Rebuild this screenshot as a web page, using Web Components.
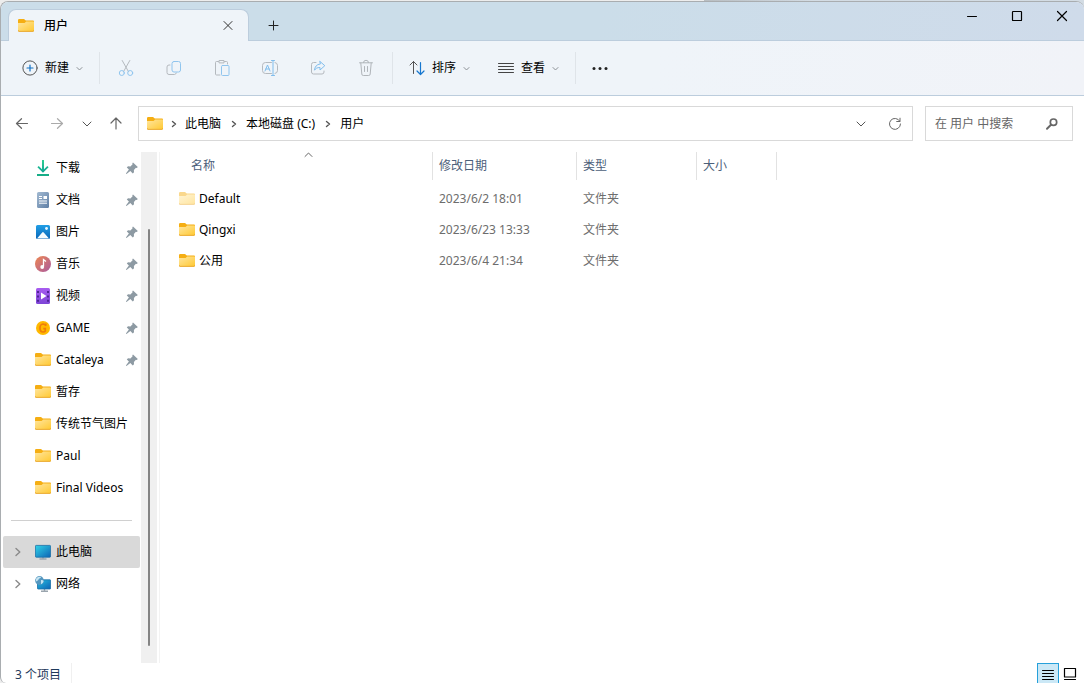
<!DOCTYPE html>
<html lang="zh-CN">
<head>
<meta charset="utf-8">
<meta name="viewport" content="width=device-width, initial-scale=1">
<title>用户</title>
<style>
  html, body { margin: 0; height: 100%; }
  body {
    background: linear-gradient(90deg, #ededed 64.9%, #b9bec2 64.9%, #d3dce4 75%);
    font: 12px/16px "Noto Sans", "Noto Sans CJK SC", sans-serif;
    color: #000;
    overflow: hidden;
  }
</style>
</head>
<body>
<explorer-window></explorer-window>

<script>
const FOLDER = (id, a, b, tab, edge) => `<svg width="16" height="16" viewBox="0 1 16 16">
  <defs><linearGradient id="${id}" x1="0" y1="0" x2="1" y2="1"><stop offset="0" stop-color="${a}"/><stop offset="1" stop-color="${b}"/></linearGradient></defs>
  <path d="M0 3.2A1.2 1.2 0 0 1 1.2 2H6l1.8 1.6H15a1 1 0 0 1 1 1V8H0z" fill="${tab}"/>
  <path d="M0 6h6.6l1.6-1.5H15.5l.5.5v8.2a1 1 0 0 1-1 1H1a1 1 0 0 1-1-1z" fill="url(#${id})"/>
  <path d="M0 13.200a1.1 1.1 0 0 0 1 1.2h14A1.1 1.1 0 0 0 16 13.200" fill="none" stroke="${edge}" stroke-width=".9"/></svg>`;
const LINE = (w, h, body, stroke = '#333') =>
  `<svg width="${w}" height="${h}" viewBox="0 0 ${w} ${h}" fill="none" stroke="${stroke}" stroke-linecap="round" stroke-linejoin="round">${body}</svg>`;

const ICONS = {
  folder: FOLDER('f', '#ffe6a0', '#ffc933', '#f5ae13', '#e8a11c'),
  'folder-dim': FOLDER('f', '#fff4d4', '#ffe5a0', '#fad88d', '#f3cf8c'),
  close: LINE(10, 10, '<path d="M1 .5l8 8M9 .5L1 8.500"/>', '#333'),
  'win-close': LINE(12, 12, '<path d="M1.5 1.5l9 9M10.5 1.5l-9 9" stroke-width="1.2"/>', '#000'),
  'win-min': LINE(10, 10, '<path d="M.5 5.5h9"/>', '#000'),
  'win-max': LINE(12, 12, '<rect x="1.5" y="1.5" width="9" height="9" rx=".6" stroke-width="1.2"/>', '#000'),
  plus: LINE(11, 11, '<path d="M5.5 1v9M1 5.5h9"/>', '#222'),
  add: LINE(16, 16, '<circle cx="8" cy="8" r="7.1" stroke="#555"/><path d="M8 5v6M5 8h6" stroke="#1170c4" stroke-width="1.2"/>'),
  down: LINE(7, 7, '<path d="M1 2.5l2.5 2.5L6 2.5"/>', '#8c9196'),
  'down-lg': LINE(10, 8, '<path d="M1 2l4 4 4-4"/>', '#555'),
  cut: LINE(16, 18, '<path d="M4.2 1.5l6.2 11M11.8 1.5L5.6 12.5" stroke="#b4b9be"/><circle cx="3.8" cy="14" r="2.5" stroke="#90c5ee"/><circle cx="12.2" cy="14" r="2.5" stroke="#90c5ee"/>'),
  copy: LINE(16, 16, '<path d="M4 5H3a2 2 0 0 0-2 2v5.5a2 2 0 0 0 2 2h5.500a2 2 0 0 0 1.800-1.500" stroke="#b4b9be"/><rect x="6" y="1.500" width="8.500" height="10.500" rx="2" stroke="#90c5ee"/>'),
  paste: LINE(16, 18, '<path d="M4.500 2.500H2.500a1 1 0 0 0-1 1V15a1 1 0 0 0 1 1H6M10.500 2.500h2a1 1 0 0 1 1 1V5M5 3.500v-2h5v2z" stroke="#b4b9be"/><rect x="7.500" y="6.500" width="7.500" height="10" rx="1" stroke="#90c5ee"/>'),
  rename: LINE(18, 18, '<path d="M10.500 3.500h-6a3 3 0 0 0-3 3v5a3 3 0 0 0 3 3h6M14 3.500a3 3 0 0 1 2.500 3v5a3 3 0 0 1-2.500 3" stroke="#b4b9be"/><path d="M12 1.500v15M10.500 1.500h3M10.500 16.500h3M4 12l2.500-6L9 12M4.800 10h3.400" stroke="#80bdec"/>'),
  share: LINE(16, 16, '<path d="M6 2.500H3.500a2 2 0 0 0-2 2V12a2 2 0 0 0 2 2h8.500a2 2 0 0 0 2-2v-1" stroke="#b4b9be"/><path d="M10 1.500l4.800 4.200L10 10V7.500c-2.800 0-4.300.8-5.500 2.700.3-3.300 2-5.900 5.500-6.200z" stroke="#80bdec"/>'),
  trash: LINE(16, 18, '<path d="M1.500 3.800h13M5.500 3.500a2.500 2.200 0 0 1 5 0M2.800 4l1 11a1.500 1.500 0 0 0 1.500 1.500h5.400a1.500 1.500 0 0 0 1.500-1.500l1-11M6.500 7.500v5M9.500 7.500v5" stroke="#b0b5ba"/>'),
  sort: LINE(16, 16, '<path d="M4.500 13.500v-12M1 5l3.500-3.500L8 5" stroke="#555"/><path d="M11.500 2.500v12M8 11l3.500 3.500L15 11" stroke="#1677cf" stroke-width="1.200"/>'),
  view: LINE(16, 14, '<path d="M.5 2.500h15M.5 5.500h15M.5 8.500h15M.5 11.500h15"/>', '#444'),
  more: '<svg width="18" height="4" viewBox="0 0 18 4" fill="#222"><circle cx="3" cy="2.500" r="1.500"/><circle cx="9" cy="2.500" r="1.500"/><circle cx="15" cy="2.500" r="1.500"/></svg>',
  back: LINE(14, 12, '<path d="M12.500 5.500H1.500M6.500 .7L1.500 5.500l5 4.800" stroke-width="1.200"/>', '#666'),
  forward: LINE(14, 12, '<path d="M1.500 5.500h11M7.500 .7l5 4.800-5 4.800" stroke-width="1.200"/>', '#aaa'),
  up: LINE(12, 14, '<path d="M6 12v-11M1 6l5-5 5 5" stroke-width="1.200"/>', '#666'),
  crumb: LINE(6, 8, '<path d="M1.500 1.500L4.500 4 1.500 6.500" stroke-width="1.400"/>', '#555'),
  expand: LINE(6, 10, '<path d="M1 1.500L4.800 5 1 8.500" stroke-width="1.400"/>', '#8a8a8a'),
  refresh: LINE(14, 14, '<path d="M11.800 4.200A5.500 5.500 0 1 0 12.500 7M12 1.200v3.300H8.700"/>', '#666'),
  search: LINE(14, 14, '<circle cx="8.500" cy="5.200" r="3.200" stroke-width="1.700"/><path d="M6 7.800L2 11.800" stroke-width="2"/>', '#666'),
  caret: LINE(9, 6, '<path d="M1 4.500l3.500-3.500L8 4.500"/>', '#666'),
  pin: '<svg width="14" height="14" viewBox="0 0 14 14" fill="#8d9aa3"><path d="M8 1.500L12.800 6l-1 .9-.9-.2-2 2.200.1 2.400-1.200 1.100L5.300 10 1.500 13l-.6-.6 3-3.800L1.800 6.400 3 5.300l2.400.1L7.600 3.300l-.3-1z"/></svg>',
  download: '<svg width="16" height="18" viewBox="0 0 16 18" fill="none"><defs><linearGradient id="d" x1="0" y1="0" x2="0" y2="1"><stop offset="0" stop-color="#2ccf92"/><stop offset="1" stop-color="#12a594"/></linearGradient></defs><path d="M7 1h2v9.200l3.300-3.200 1.300 1.300L8 13.700 2.400 8.300 3.700 7 7 10.200z" fill="url(#d)"/><path d="M2 16h12" stroke="#17ad87" stroke-width="1.800"/></svg>',
  document: '<svg width="16" height="16" viewBox="0 0 16 16"><defs><linearGradient id="g" x1="0" y1="0" x2="1" y2="1"><stop offset="0" stop-color="#a3bad2"/><stop offset="1" stop-color="#5f7fa5"/></linearGradient></defs><rect x="2" width="12" height="16" rx="1.500" fill="url(#g)"/><path d="M4 4.500h3M4 6.500h3M4 9h8M4 11.200h8" stroke="#fff"/><rect x="8.500" y="4" width="3.500" height="3" fill="#fff"/></svg>',
  picture: '<svg width="16" height="16" viewBox="0 0 16 16"><defs><linearGradient id="g" x1="0" y1="0" x2="0" y2="1"><stop offset="0" stop-color="#219fe6"/><stop offset="1" stop-color="#0966b8"/></linearGradient></defs><rect x="1" y="1" width="14" height="14" rx="1.500" fill="url(#g)"/><path d="M2 14.500L7.200 8.500a1 1 0 0 1 1.500 0L14 14.500z" fill="#f4fbff"/><circle cx="11.500" cy="4.500" r="1.400" fill="#e9f7ff"/></svg>',
  music: '<svg width="16" height="16" viewBox="0 0 16 16"><defs><linearGradient id="g" x1="0" y1="0" x2="1" y2="1"><stop offset="0" stop-color="#ee8750"/><stop offset="1" stop-color="#a95aa0"/></linearGradient></defs><circle cx="8" cy="8" r="8" fill="url(#g)"/><path d="M8.500 10.500V3.500l2.500 2" fill="none" stroke="#fff" stroke-width="1.300"/><circle cx="7.200" cy="11" r="1.900" fill="#fff"/></svg>',
  video: '<svg width="16" height="16" viewBox="0 0 16 16"><defs><linearGradient id="g" x1="0" y1="0" x2="0" y2="1"><stop offset="0" stop-color="#a85cf0"/><stop offset="1" stop-color="#7d45d6"/></linearGradient></defs><rect x="1" width="14" height="16" rx="1.500" fill="url(#g)"/><path d="M3 3v11M13 3v11" stroke="#47218c" stroke-width="1.800" stroke-dasharray="2 2.400"/><path d="M6 4.500l5.500 3.500L6 11.500z" fill="#fff"/></svg>',
  coin: '<svg width="16" height="16" viewBox="0 0 16 16"><circle cx="8" cy="8" r="7" fill="#ffb900"/><path d="M10.800 5.800A3.300 3.300 0 0 0 8 4C6 4 5 5.800 5 8s1 4 3 4c1.200 0 2-.5 2.300-1V8.600H8.300M10.800 3.500v2.300" fill="none" stroke="#ef7d0b" stroke-width="1.700"/></svg>',
  computer: '<svg width="16" height="16" viewBox="0 0 16 16"><defs><linearGradient id="g" x1="0" y1="0" x2="1" y2="1"><stop offset="0" stop-color="#31d4e8"/><stop offset="1" stop-color="#0c63b5"/></linearGradient></defs><path d="M8 12v2.500M4.500 15h7" stroke="#9aa5ae" stroke-width="1.400"/><rect x=".4" y="1.400" width="15.200" height="11.800" rx=".8" fill="url(#g)" stroke="#1a6fa6" stroke-width=".8"/></svg>',
  network: '<svg width="16" height="16" viewBox="0 0 16 16"><defs><linearGradient id="g" x1="0" y1="0" x2="1" y2="1"><stop offset="0" stop-color="#27bfe0"/><stop offset="1" stop-color="#0c63b5"/></linearGradient></defs><path d="M9.500 12.500v2M6 15.300h7" stroke="#9aa5ae" stroke-width="1.400"/><rect x="2.500" y="3.800" width="13.100" height="9.200" rx=".6" fill="url(#g)" stroke="#1a6fa6" stroke-width=".8"/><circle cx="4.500" cy="4.500" r="4.400" fill="#5597bf"/><path d="M1.200 2.500C2.500.8 4.500.3 6 1c-.3 1.600-2 1.200-2.500 2.500S2 5.200.6 5.400zM6 4.200c1-.5 2 0 2.600.8-.3 1.700-1.300 2.800-2.600 3.300z" fill="#c5e4f2"/></svg>',
  details: LINE(14, 14, '<path d="M1.500 3.500h11M1.500 6.500h11M1.500 9.500h11M1.500 12.500h11"/>', '#000'),
  tiles: LINE(14, 14, '<path d="M1.500 1.500h11v8.500h-11zM1.500 12.500h11" stroke-width="1.200"/>', '#000')
};

const RESET = `
  *, ::before, ::after { box-sizing: border-box; }
  button { font: inherit; color: inherit; background: none; border: 0; margin: 0; padding: 0;
    display: flex; align-items: center; justify-content: center; white-space: nowrap; }
  a { color: inherit; text-decoration: none; }
`;

/* Base class: renders the string returned by view() into an open shadow root. */
class Base extends HTMLElement {
  connectedCallback() {
    if (this.shadowRoot) return;
    this.attachShadow({ mode: 'open' });
    this.shadowRoot.innerHTML = `<style>${RESET}${this.css()}</style>${this.view()}`;
  }
  css() { return ''; }
}

customElements.define('app-icon', class extends Base {
  css() { return ':host { display: inline-flex; flex: none; } svg { display: block; }'; }
  view() { return ICONS[this.getAttribute('name')].replace('<svg', '<svg aria-hidden="true"'); }
});

customElements.define('title-bar', class extends Base {
  css() { return `
    :host { display: flex; height: 39px; padding-left: 7px; border-bottom: 1px solid #bccddd;
      background: linear-gradient(100deg, #cbdde9 55%, #cfdbea); }
    .tab { display: flex; align-items: center; width: 241px; margin: 7px 0 -1px; padding: 0 9px; gap: 10px;
      background: #eff4f9; border: 1px solid #bccddd; border-bottom: 0; border-radius: 8px 8px 0 0; font-weight: 500; }
    .tab span { flex: 1; }
    .tab button { width: 22px; height: 22px; }
    .new { width: 32px; margin: 8px 0 0 8px; }
    .win { display: flex; margin-left: auto; height: 28px; }
    .win button { width: 45px; }`; }
  view() { return `
    <div class="tab"><app-icon name="folder"></app-icon><span>用户</span><button aria-label="关闭标签页"><app-icon name="close"></app-icon></button></div>
    <button class="new" aria-label="新标签页"><app-icon name="plus"></app-icon></button>
    <div class="win">
      <button aria-label="最小化"><app-icon name="win-min"></app-icon></button>
      <button aria-label="最大化"><app-icon name="win-max"></app-icon></button>
      <button aria-label="关闭"><app-icon name="win-close"></app-icon></button>
    </div>`; }
});

customElements.define('menu-button', class extends Base {
  css() { return ':host { display: flex; } button { padding: 0 14px; gap: 7px; }'; }
  view() { return `<button aria-haspopup="menu"><app-icon name="${this.getAttribute('icon')}"></app-icon><slot></slot><app-icon name="down"></app-icon></button>`; }
});

customElements.define('command-bar', class extends Base {
  css() { return `
    :host { display: flex; align-items: stretch; height: 55px; padding: 0 7px; border-bottom: 1px solid #bccddd;
      background: linear-gradient(100deg, #eff4f9 60%, #f1f3f8); }
    hr { width: 1px; height: 32px; margin: auto 2px; border: 0; background: #dfe4e9; flex: none; }
    .tool { width: 48px; }
    .more { width: 44px; }`; }
  view() {
    const tools = [['cut', '剪切'], ['copy', '复制'], ['paste', '粘贴'], ['rename', '重命名'], ['share', '共享'], ['trash', '删除']];
    return `
    <menu-button icon="add">新建</menu-button><hr>
    ${tools.map(([i, l]) => `<button class="tool" disabled aria-label="${l}"><app-icon name="${i}"></app-icon></button>`).join('')}
    <hr><menu-button icon="sort">排序</menu-button><menu-button icon="view">查看</menu-button><hr>
    <button class="more" aria-label="更多"><app-icon name="more"></app-icon></button>`; }
});

customElements.define('address-bar', class extends Base {
  css() { return `
    :host { display: flex; height: 56px; padding: 10px 11px 11px 3px; }
    .nav { display: flex; margin-right: 6px; }
    .nav button { width: 34px; }
    .nav .wide { width: 36px; }
    .nav .slim { width: 26px; }
    .nav .last { width: 32px; }
    .path, .search { display: flex; align-items: center; border: 1px solid #d9d9d9; background: #fff; }
    .path { flex: 1; min-width: 0; padding-left: 8px; }
    .search { width: 148px; margin-left: 12px; padding: 0 13px 0 9px; }
    ol { display: flex; flex: 1; margin: 0; padding: 0; list-style: none; }
    li { display: flex; align-items: center; }
    li app-icon { width: 25px; justify-content: center; }
    li:first-child app-icon { width: 22px; }
    .path > button { width: 34px; height: 33px; }
    input { flex: 1; min-width: 0; width: 0; border: 0; padding: 0; background: none; font: inherit; outline: 0; }
    input::placeholder { color: #666; opacity: 1; }`; }
  view() { return `
    <div class="nav">
      <button class="wide" aria-label="后退"><app-icon name="back"></app-icon></button>
      <button aria-label="前进"><app-icon name="forward"></app-icon></button>
      <button class="slim" aria-label="最近的位置"><app-icon name="down-lg"></app-icon></button>
      <button class="last" aria-label="向上"><app-icon name="up"></app-icon></button>
    </div>
    <div class="path"><app-icon name="folder"></app-icon>
      <ol>${['此电脑', '本地磁盘 (C:)', '用户'].map(t => `<li><app-icon name="crumb"></app-icon><a href="#">${t}</a></li>`).join('')}</ol>
      <button aria-label="历史记录"><app-icon name="down-lg"></app-icon></button>
      <button aria-label="刷新"><app-icon name="refresh"></app-icon></button>
    </div>
    <label class="search"><input type="text" placeholder="在 用户 中搜索" aria-label="在 用户 中搜索"><app-icon name="search"></app-icon></label>`; }
});

customElements.define('nav-item', class extends Base {
  css() { return `
    :host { display: block; }
    a { display: flex; align-items: center; gap: 5px; height: 32px; padding-right: 1px; border-radius: 2px; white-space: nowrap; }
    :host([selected]) a { background: #d9d9d9; }
    .lead { display: flex; justify-content: center; width: 27px; padding-left: 2px; flex: none; }
    .text { flex: 1; min-width: 0; }`; }
  view() { return `<a href="#">
    <span class="lead">${this.hasAttribute('expandable') ? '<app-icon name="expand"></app-icon>' : ''}</span>
    <app-icon name="${this.getAttribute('icon')}"></app-icon><span class="text"><slot></slot></span>
    ${this.hasAttribute('pinned') ? '<app-icon name="pin"></app-icon>' : ''}</a>`; }
});

customElements.define('nav-pane', class extends Base {
  css() { return `
    :host { display: flex; width: 159px; flex: none; border-right: 1px solid #f3f3f3; }
    nav { flex: 1; min-width: 0; padding-left: 2px; margin-right: 1px; overflow: hidden; }
    hr { height: 1px; margin: 16px 8px 15px; border: 0; background: #d0d0d0; }
    .track { display: flex; justify-content: center; width: 16px; margin-right: 2px; padding: 77px 0 17px; background: #f0f0f0; }
    .thumb { width: 2px; background: #848484; border-radius: 1px; }`; }
  view() { return `
    <nav aria-label="导航窗格">
      <nav-item icon="download" pinned>下载</nav-item>
      <nav-item icon="document" pinned>文档</nav-item>
      <nav-item icon="picture" pinned>图片</nav-item>
      <nav-item icon="music" pinned>音乐</nav-item>
      <nav-item icon="video" pinned>视频</nav-item>
      <nav-item icon="coin" pinned>GAME</nav-item>
      <nav-item icon="folder" pinned>Cataleya</nav-item>
      <nav-item icon="folder">暂存</nav-item>
      <nav-item icon="folder">传统节气图片</nav-item>
      <nav-item icon="folder">Paul</nav-item>
      <nav-item icon="folder">Final Videos</nav-item>
      <hr>
      <nav-item icon="computer" expandable selected>此电脑</nav-item>
      <nav-item icon="network" expandable>网络</nav-item>
    </nav>
    <div class="track"><div class="thumb"></div></div>`; }
});

customElements.define('file-list', class extends Base {
  css() { return `
    :host { display: block; flex: 1; min-width: 0; }
    table { width: 617px; table-layout: fixed; border-collapse: collapse; }
    .c-name { width: 273px; } .c-date { width: 144px; } .c-type { width: 120px; } .c-size { width: 80px; }
    th { padding: 0 0 3px; height: 31px; font-weight: 400; text-align: left; color: #4c607a; }
    th div { position: relative; height: 28px; padding-left: 6px; border-right: 1px solid #e2e2e2; line-height: 28px; }
    th:first-child div { padding-left: 31px; }
    .caret { position: absolute; top: 0; left: 144px; }
    td { height: 31px; padding: 0 0 0 6px; color: #6d6d6d; }
    td:first-child { padding-left: 19px; color: #000; }
    td span { display: flex; align-items: center; gap: 4px; }`; }
  view() {
    const rows = [['folder-dim', 'Default', '2023/6/2 18:01'], ['folder', 'Qingxi', '2023/6/23 13:33'], ['folder', '公用', '2023/6/4 21:34']];
    return `<table>
      <colgroup><col class="c-name"><col class="c-date"><col class="c-type"><col class="c-size"></colgroup>
      <thead><tr>
        <th scope="col" aria-sort="ascending"><div>名称<app-icon class="caret" name="caret"></app-icon></div></th>
        <th scope="col"><div>修改日期</div></th><th scope="col"><div>类型</div></th><th scope="col"><div>大小</div></th>
      </tr></thead>
      <tbody>${rows.map(([i, n, d]) => `<tr><td><span><app-icon name="${i}"></app-icon>${n}</span></td><td>${d}</td><td>文件夹</td><td></td></tr>`).join('')}</tbody>
    </table>`; }
});

customElements.define('status-bar', class extends Base {
  css() { return `
    :host { display: flex; align-items: flex-start; height: 20px; padding: 0 3px 0 14px; overflow: hidden; color: #1e395b; }
    .count { padding: 4px 10px 0 0; border-right: 1px solid #f0f0f0; }
    .modes { display: flex; margin-left: auto; }
    button { width: 22px; height: 22px; border: 1px solid transparent; }
    button[aria-pressed="true"] { border-color: #26a0da; background: #cbe8f6; }`; }
  view() { return `
    <span class="count">3 个项目</span>
    <div class="modes">
      <button aria-pressed="true" aria-label="详细信息"><app-icon name="details"></app-icon></button>
      <button aria-pressed="false" aria-label="大缩略图"><app-icon name="tiles"></app-icon></button>
    </div>`; }
});

customElements.define('explorer-window', class extends Base {
  css() { return `
    :host { display: block; height: 100vh; padding-top: 1px; box-sizing: border-box; }
    .frame { display: flex; flex-direction: column; height: 100%; background: #fff; overflow: hidden;
      border: 1px solid #a9adb0; border-width: 1px 0 0 1px; border-radius: 8px 8px 0 6px; }
    main { display: flex; flex: 1; min-height: 0; }`; }
  view() { return `<div class="frame">
    <title-bar></title-bar><command-bar></command-bar><address-bar></address-bar>
    <main><nav-pane></nav-pane><file-list></file-list></main>
    <status-bar></status-bar></div>`; }
});
</script>
</body>
</html>
